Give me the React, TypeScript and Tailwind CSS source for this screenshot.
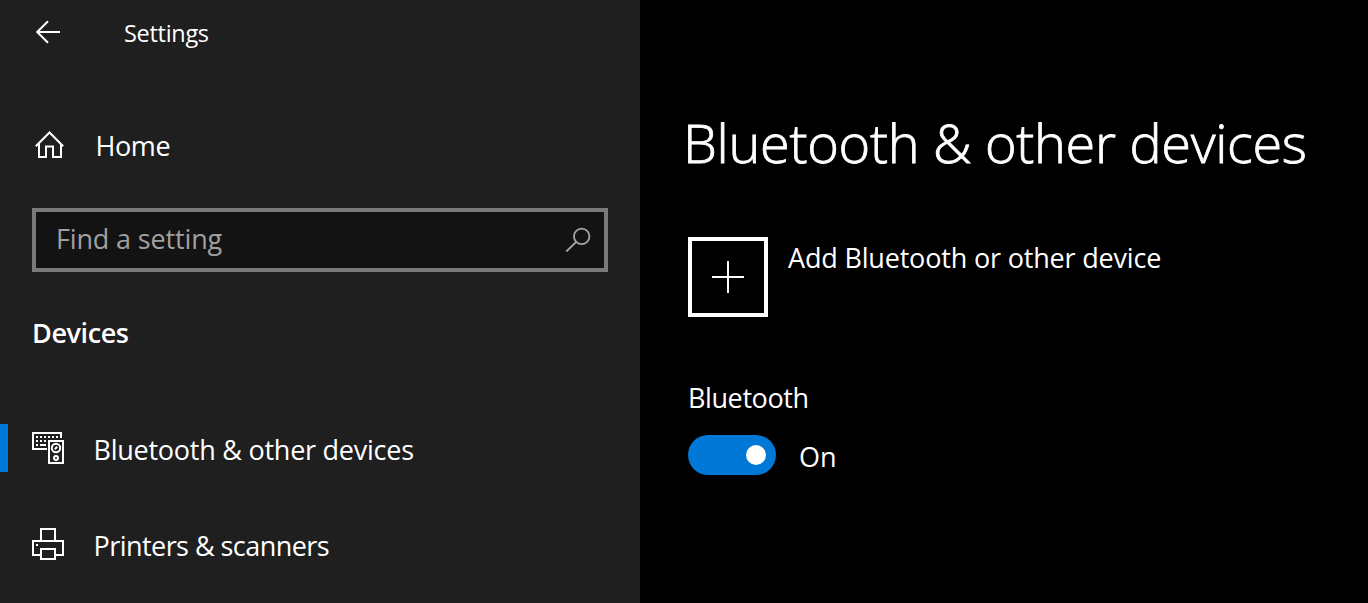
import React from 'react';

function BackIcon() {
  return (
    <svg className="mb-[2px] h-6 w-6" viewBox="0 0 24 24" fill="none" stroke="white" strokeWidth="2">
      <path d="M24 12H1.5M12 1.2L1.2 12L12 22.8" />
    </svg>
  );
}

function HomeIcon() {
  return (
    <svg className="h-8 w-8" viewBox="0 0 32 32" fill="none" stroke="white" strokeWidth="2">
      <path d="M1.8 17.2L15.5 3.5L29.2 17.2M5 14.5V28H12V17.5H19V28H27V14.5" />
    </svg>
  );
}

function SearchIcon() {
  return (
    <svg className="h-6 w-[26px] overflow-visible" viewBox="0 0 26 24" fill="none" stroke="#a6a6a6" strokeWidth="1.8">
      <circle cx="16.7" cy="8.4" r="7.7" />
      <path d="M11.2 13.9L1.3 23.5" />
    </svg>
  );
}

function DevicesIcon() {
  return (
    <svg className="h-8 w-8" viewBox="0 0 32 32" fill="none" stroke="white" strokeWidth="2" shapeRendering="crispEdges">
      <path d="M29 6V1H1V17H15" />
      <path d="M4 5H26" strokeDasharray="2 2" />
      <path d="M4 9H6M8 9H10M12 9H14M4 13H6M8 13H14" />
      <path d="M17 9H31V31H17Z" />
      <g shapeRendering="auto">
        <circle cx="24" cy="16" r="4.2" />
        <circle cx="24" cy="26" r="2" />
        <path d="M22.8 17.2L25.2 14.8" />
      </g>
    </svg>
  );
}

function PrinterIcon() {
  return (
    <svg className="h-8 w-8" viewBox="0 0 32 32" fill="none" stroke="white" strokeWidth="2" shapeRendering="crispEdges">
      <path d="M9 13V1H23V13M9 27H1V13H31V27H23M9 21H23V31H9ZM4 17H6" />
    </svg>
  );
}

function NavItem({ icon, label, active, spacing }: { icon: React.ReactNode; label: string; active?: boolean; spacing: string }) {
  return (
    <a className="flex h-24 items-center">
      <span className={active ? 'h-12 w-2 bg-[#0078d7]' : 'h-12 w-2'} />
      <span className="ml-6">{icon}</span>
      <span className={`ml-[29.5px] pt-[3px] text-[27px] leading-10 ${spacing}`}>{label}</span>
    </a>
  );
}

export default function App() {
  return (
    <div className="flex h-[603px] w-[1368px] overflow-hidden whitespace-nowrap bg-black font-['Open_Sans','Noto_Sans',sans-serif] text-white">
      <aside className="flex w-[640px] flex-col bg-[#1f1f1f]">
        <header className="flex h-[65px] items-center pl-9">
          <BackIcon />
          <h1 className="ml-16 pt-px text-[23.5px] leading-8 tracking-[-0.3px]">Settings</h1>
        </header>
        <a className="mt-12 flex h-16 items-center pl-[34px]">
          <HomeIcon />
          <span className="ml-[29.5px] pt-[2px] text-[27px] leading-10 tracking-[-0.4px]">Home</span>
        </a>
        <div className="mx-8 mt-[31px] flex h-16 items-center justify-between border-4 border-[#7a7a7a] bg-[#131313] pl-5 pr-[13px]">
          <span className="pb-[3px] text-[27px] leading-10 tracking-[-0.15px] text-[#a0a0a0]">Find a setting</span>
          <SearchIcon />
        </div>
        <h2 className="ml-8 mt-[41px] text-[27px] font-semibold leading-10 tracking-[-0.4px]">Devices</h2>
        <nav className="mt-[47px]">
          <NavItem icon={<DevicesIcon />} label="Bluetooth & other devices" active spacing="tracking-[-0.25px]" />
          <NavItem icon={<PrinterIcon />} label="Printers & scanners" spacing="tracking-[-0.55px]" />
        </nav>
      </aside>
      <main className="flex flex-1 flex-col items-start pl-12 pt-[104px]">
        <h2 className="-ml-[5px] text-[54px] font-light leading-[76px] tracking-[-0.3px] [-webkit-text-stroke:0.8px_white]">Bluetooth &amp; other devices</h2>
        <button className="mt-[57px] flex items-start">
          <span className="flex h-20 w-20 items-center justify-center border-4 border-white">
            <svg className="h-8 w-8" viewBox="0 0 32 32" stroke="white" strokeWidth="2" shapeRendering="crispEdges">
              <path d="M0 16H32M16 0V32" />
            </svg>
          </span>
          <span className="ml-5 pt-px text-[27px] leading-10 tracking-[-0.18px]">Add Bluetooth or other device</span>
        </button>
        <span className="mt-[61px] text-[27px] leading-10 tracking-[-0.4px]">Bluetooth</span>
        <div className="mt-[17px] flex h-10 items-center">
          <span className="flex h-10 w-[88px] items-center justify-end rounded-full bg-[#0078d7] pr-[10px]">
            <span className="h-5 w-5 rounded-full bg-white" />
          </span>
          <span className="ml-[23px] pt-[3px] text-[27px] leading-10">On</span>
        </div>
      </main>
    </div>
  );
}
